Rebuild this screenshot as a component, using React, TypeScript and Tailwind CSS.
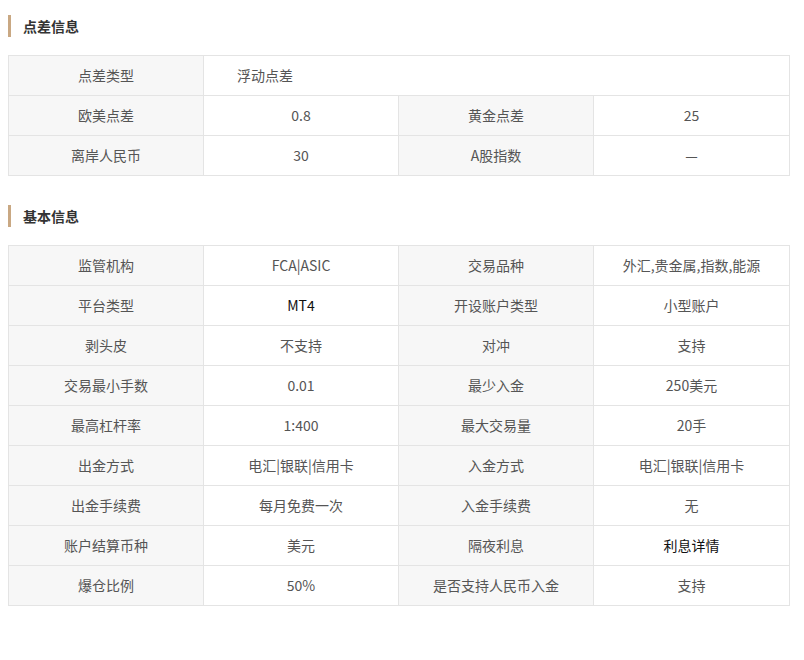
const F = { fontFamily: '"Microsoft YaHei","Noto Sans CJK SC",sans-serif' };

type Cell = { t: string; dark?: boolean };
const rows2: [string, Cell, string, Cell][] = [
  ['监管机构', { t: 'FCA|ASIC' }, '交易品种', { t: '外汇,贵金属,指数,能源' }],
  ['平台类型', { t: 'MT4', dark: true }, '开设账户类型', { t: '小型账户' }],
  ['剥头皮', { t: '不支持' }, '对冲', { t: '支持' }],
  ['交易最小手数', { t: '0.01' }, '最少入金', { t: '250美元' }],
  ['最高杠杆率', { t: '1:400' }, '最大交易量', { t: '20手' }],
  ['出金方式', { t: '电汇|银联|信用卡' }, '入金方式', { t: '电汇|银联|信用卡' }],
  ['出金手续费', { t: '每月免费一次' }, '入金手续费', { t: '无' }],
  ['账户结算币种', { t: '美元' }, '隔夜利息', { t: '利息详情', dark: true }],
  ['爆仓比例', { t: '50%' }, '是否支持人民币入金', { t: '支持' }],
];

function Head({ t }: { t: string }) {
  return (
    <div className="flex items-center h-[22px] border-l-[3px] border-[#c9a883] pl-[12px] text-[14px] font-bold text-[#333]">{t}</div>
  );
}
const L = 'h-[40px] border border-[#e4e4e4] bg-[#f7f7f7] text-center text-[14px] text-[#555] p-0';
const V = 'h-[40px] border border-[#e4e4e4] bg-white text-center text-[14px] p-0';

function Cols() {
  return (
    <colgroup>
      <col className="w-[195px]" />
      <col className="w-[195px]" />
      <col className="w-[195px]" />
      <col className="w-[196px]" />
    </colgroup>
  );
}

export default function App() {
  return (
    <div className="w-[804px] h-[660px] bg-white pt-[15px] px-[8px]" style={F}>
      <Head t="点差信息" />
      <table className="mt-[18px] w-[781px] border-collapse table-fixed">
        <Cols />
        <tbody>
          <tr>
            <td className={L}>点差类型</td>
            <td colSpan={3} className={V + ' pl-[33px] text-[#555]'} style={{ textAlign: 'left' }}>浮动点差</td>
          </tr>
          <tr>
            <td className={L}>欧美点差</td><td className={V + ' text-[#555]'}>0.8</td>
            <td className={L}>黄金点差</td><td className={V + ' text-[#555]'}>25</td>
          </tr>
          <tr>
            <td className={L}>离岸人民币</td><td className={V + ' text-[#555]'}>30</td>
            <td className={L}>A股指数</td><td className={V + ' text-[#555]'}>—</td>
          </tr>
        </tbody>
      </table>
      <div className="mt-[29px]"><Head t="基本信息" /></div>
      <table className="mt-[18px] w-[781px] border-collapse table-fixed">
        <Cols />
        <tbody>
          {rows2.map((r, i) => (
            <tr key={i}>
              <td className={L}>{r[0]}</td>
              <td className={V + (r[1].dark ? ' text-[#111]' : ' text-[#555]')}>{r[1].t}</td>
              <td className={L}>{r[2]}</td>
              <td className={V + (r[3].dark ? ' text-[#111]' : ' text-[#555]')}>{r[3].t}</td>
            </tr>
          ))}
        </tbody>
      </table>
    </div>
  );
}
